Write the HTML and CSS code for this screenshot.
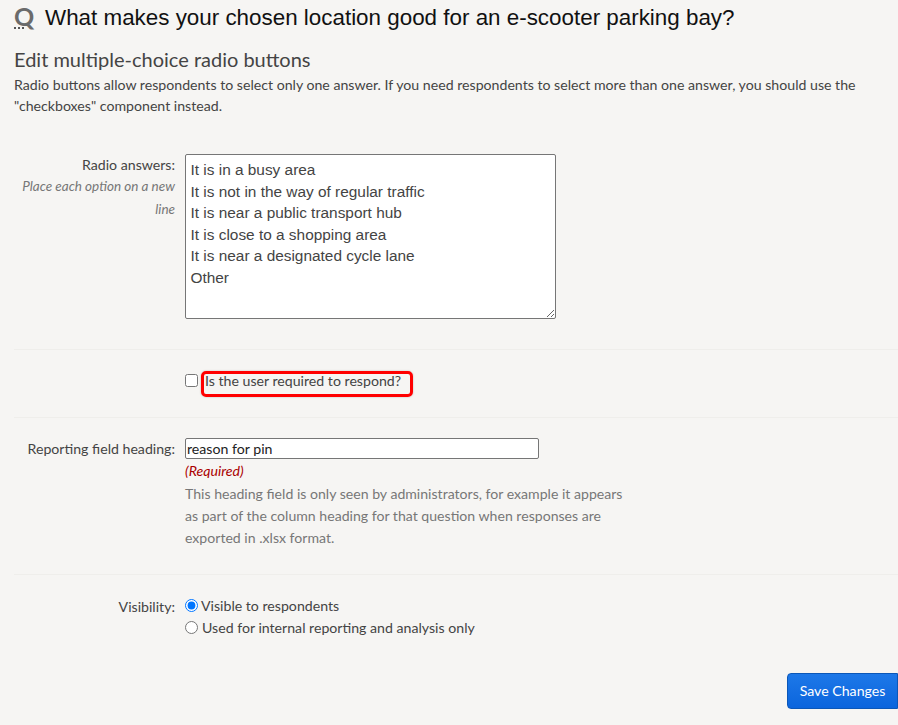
FILE: index.html
```html
<!DOCTYPE html>
<html lang="en">
<head>
<meta charset="utf-8">
<title>Edit question</title>
<link rel="stylesheet" href="styles.css">
</head>
<body>
<header class="question">
  <span class="q-icon">Q<span class="q-dots"></span></span>
  <h1 class="q-title">What makes your chosen location good for an e-scooter parking bay?</h1>
</header>
<h2 class="heading">Edit multiple-choice radio buttons</h2>
<p class="intro">Radio buttons allow respondents to select only one answer. If you need respondents to select more than one answer, you should use the "checkboxes" component instead.</p>
<form class="form">
  <div class="row row-answers">
    <div class="label">
      <label for="answers">Radio answers:</label>
      <em class="hint">Place each option on a new line</em>
    </div>
    <div class="field">
      <textarea id="answers" class="answers">It is in a busy area
It is not in the way of regular traffic
It is near a public transport hub
It is close to a shopping area
It is near a designated cycle lane
Other</textarea>
    </div>
  </div>
  <div class="row row-required">
    <div class="label"></div>
    <div class="field check-field">
      <input type="checkbox" id="required" class="check">
      <label for="required" class="highlight">Is the user required to respond?</label>
    </div>
  </div>
  <div class="row row-heading">
    <div class="label"><label for="heading">Reporting field heading:</label></div>
    <div class="field">
      <input id="heading" class="text-input" type="text" value="reason for pin">
      <em class="required">(Required)</em>
      <p class="help">This heading field is only seen by administrators, for example it appears as part of the column heading for that question when responses are exported in .xlsx format.</p>
    </div>
  </div>
  <div class="row row-visibility">
    <div class="label"><span>Visibility:</span></div>
    <div class="field">
      <div class="radio-line"><input type="radio" name="vis" id="v1" class="radio" checked><label for="v1">Visible to respondents</label></div>
      <div class="radio-line"><input type="radio" name="vis" id="v2" class="radio"><label for="v2" class="radio-label-2">Used for internal reporting and analysis only</label></div>
    </div>
  </div>
  <div class="actions">
    <button type="button" class="save">Save Changes</button>
  </div>
</form>
</body>
</html>
```

FILE: styles.css
```css
* { box-sizing: border-box; }
html, body { margin: 0; height: 725px; overflow: hidden; }
body {
  background: #f6f5f3;
  color: #444;
  font-family: Lato, sans-serif;
  font-size: 14.15px;
  line-height: 22px;
  padding: 0 0 0 14px;
}
.question { display: flex; align-items: center; height: 36px; }
.q-icon {
  position: relative;
  width: 31px;
  margin-top: -4px;
  font-size: 25px;
  font-weight: 700;
  line-height: 34px;
  color: #6b6b6b;
}
.q-dots {
  position: absolute;
  left: 0;
  top: 28px;
  width: 10px;
  height: 2px;
  background: repeating-linear-gradient(90deg, #555 0 2px, transparent 2px 4px);
}
.q-title {
  margin: 0;
  font-family: "Liberation Sans", sans-serif;
  font-size: 22.4px;
  font-weight: 400;
  line-height: 34px;
  color: #111;
  white-space: nowrap;
}
.heading {
  margin: 10px 0 0;
  font-size: 20px;
  font-weight: 400;
  line-height: 26px;
  color: #444;
}
.intro { margin: 2px 0 0; padding-right: 14px; line-height: 21px; }
.form { margin-top: 38px; }
.row {
  display: flex;
  border-bottom: 1px solid #efeeeb;
}
.label { width: 161px; margin-right: 10px; text-align: right; flex: none; }
.label label, .label span { display: block; }
.row-answers .label label { line-height: 21px; }
.hint { display: block; color: #777; font-size: 13.5px; line-height: 22.5px; }
.field { flex: 1; min-width: 0; }
.row-answers { height: 196px; }
.answers {
  display: block;
  width: 371px;
  height: 165px;
  padding: 4px 4.5px;
  border: 1px solid #767676;
  border-radius: 2px;
  background: #fff;
  color: #444;
  font-family: "Liberation Sans", sans-serif;
  font-size: 15.4px;
  line-height: 21.6px;
}
.row-required { height: 68px; padding-top: 21px; }
.check-field { display: flex; align-items: flex-start; }
.check { width: 13px; height: 13px; margin: 3px 3px 0 0; flex: none; }
.highlight {
  display: block;
  width: 212px;
  height: 26px;
  padding: 0 0 0 1px;
  border: 3px solid #f00;
  border-radius: 5px;
  line-height: 14px;
  white-space: nowrap;
  box-shadow: 0 0 2px rgba(0,0,0,.25);
}
.row-heading { height: 157px; padding-top: 20px; }
.text-input {
  display: block;
  width: 354px;
  height: 21px;
  padding: 1px 1px;
  border: 1px solid #767676;
  border-radius: 2px;
  background: #fff;
  color: #222;
  font-family: Lato, sans-serif;
  font-size: 14.15px;
}
.required { display: block; color: #a00; margin-top: 1px; line-height: 22px; }
.help { margin: 1px 0 0; width: 448px; color: #777; font-size: 14.1px; }
.row-visibility { border-bottom: 0; padding-top: 21px; height: 89px; }
.radio-line { display: flex; align-items: flex-start; height: 22px; line-height: 20px; }
.radio { width: 13px; height: 13px; margin: 3px 3px 0 0; flex: none; accent-color: #0075ff; }
.radio-label-2 { margin-left: 1px; }
.actions { display: flex; justify-content: flex-end; margin-top: 9px; }
.save {
  width: 111px;
  height: 36px;
  border: 1px solid #0b57b8;
  border-radius: 4px 0 0 4px;
  background: linear-gradient(#1d78e8, #0b65dd);
  color: #fff;
  font-family: Lato, sans-serif;
  font-size: 14.15px;
  padding: 0 0 2px;
}
```
